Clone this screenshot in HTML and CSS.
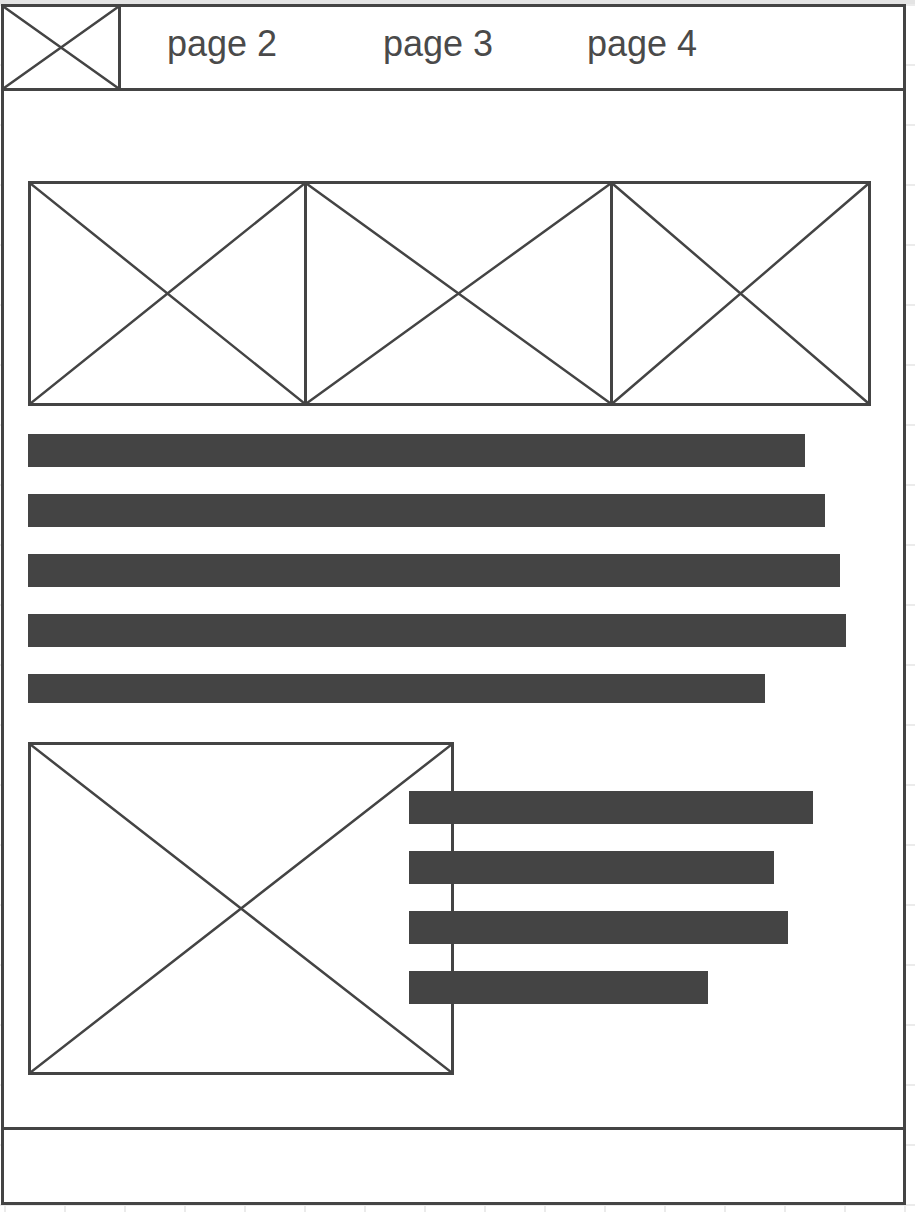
FILE: index.html
```html
<!DOCTYPE html>
<html lang="en">
<head>
    <meta charset="UTF-8">
    <meta name="viewport" content="width=device-width, initial-scale=1.0">
    <title>Wireframe</title>
    <link rel="stylesheet" href="styles.css">
</head>
<body>
<div class="page">
    <div class="header">
        <div class="logo">
            <svg class="x" viewBox="0 0 100 100" preserveAspectRatio="none"><path d="M0 0L100 100M100 0L0 100"/></svg>
        </div>
        <div class="nav">
            <span>page 2</span>
            <span>page 3</span>
            <span>page 4</span>
        </div>
    </div>

    <div class="main">
        <div class="gallery">
            <div class="cell">
                <svg class="x" viewBox="0 0 100 100" preserveAspectRatio="none"><path d="M0 0L100 100M100 0L0 100"/></svg>
            </div>
            <div class="cell">
                <svg class="x" viewBox="0 0 100 100" preserveAspectRatio="none"><path d="M0 0L100 100M100 0L0 100"/></svg>
            </div>
            <div class="cell">
                <svg class="x" viewBox="0 0 100 100" preserveAspectRatio="none"><path d="M0 0L100 100M100 0L0 100"/></svg>
            </div>
        </div>

        <div class="lines">
            <div class="bar" style="width: 777px;"></div>
            <div class="bar" style="width: 797px;"></div>
            <div class="bar" style="width: 812px;"></div>
            <div class="bar" style="width: 818px;"></div>
            <div class="bar short" style="width: 737px;"></div>
        </div>

        <div class="media">
            <div class="media-img">
                <svg class="x" viewBox="0 0 100 100" preserveAspectRatio="none"><path d="M0 0L100 100M100 0L0 100"/></svg>
            </div>
            <div class="media-text">
                <div class="bar" style="width: 404px;"></div>
                <div class="bar" style="width: 365px;"></div>
                <div class="bar" style="width: 379px;"></div>
                <div class="bar" style="width: 299px;"></div>
            </div>
        </div>
    </div>

    <div class="footer"></div>
</div>
</body>
</html>
```

FILE: styles.css
```css
* {
    margin: 0;
    padding: 0;
    box-sizing: border-box;
}

html {
    height: 100%;
}

body {
    min-height: 1212px;
    padding: 4px 0 0 1px;
    font-family: 'Liberation Sans', Arial, sans-serif;
    color: #444;
    background-color: #fff;
    background-image:
        linear-gradient(#e4e4e4, #e4e4e4),
        linear-gradient(90deg, #ebebeb 2px, transparent 2px),
        linear-gradient(#ebebeb 2px, transparent 2px);
    background-size: 100% 4px, 60px 60px, 60px 60px;
    background-position: 0 0, 4px 4px, 4px 4px;
    background-repeat: no-repeat, repeat, repeat;
}

.page {
    width: 905px;
    height: 1201px;
    border: 3px solid #444;
    background: #fff;
    display: flex;
    flex-direction: column;
}

.x {
    display: block;
    width: 100%;
    height: 100%;
}

.x path {
    fill: none;
    stroke: #444;
    stroke-width: 2.5;
    vector-effect: non-scaling-stroke;
}

/* header */
.header {
    height: 84px;
    display: flex;
    border-bottom: 3px solid #444;
}

.logo {
    width: 117px;
    border-right: 3px solid #444;
}

.nav {
    display: grid;
    grid-template-columns: 216px 204px auto;
    align-items: center;
    padding: 0 0 7px 46px;
    font-size: 36px;
    color: #4a4a4a;
}

/* main area */
.main {
    flex-grow: 1;
    padding: 90px 0 0 24px;
}

.gallery {
    width: 843px;
    height: 225px;
    border: 3px solid #444;
    display: grid;
    grid-template-columns: 273px 306px 1fr;
    grid-template-rows: 219px;
}

.cell {
    overflow: hidden;
}

.cell + .cell {
    border-left: 3px solid #444;
}

.lines {
    display: flex;
    flex-direction: column;
    gap: 27px;
    margin-top: 28px;
}

.bar {
    height: 33px;
    background: #444;
}

.bar.short {
    height: 29px;
}

.media {
    display: flex;
    align-items: flex-start;
    margin-top: 39px;
}

.media-img {
    width: 426px;
    height: 333px;
    border: 3px solid #444;
    flex-shrink: 0;
}

.media-text {
    position: relative;
    display: flex;
    flex-direction: column;
    gap: 27px;
    margin-left: -45px;
    padding-top: 49px;
}

.footer {
    height: 75px;
    border-top: 3px solid #444;
}
```
